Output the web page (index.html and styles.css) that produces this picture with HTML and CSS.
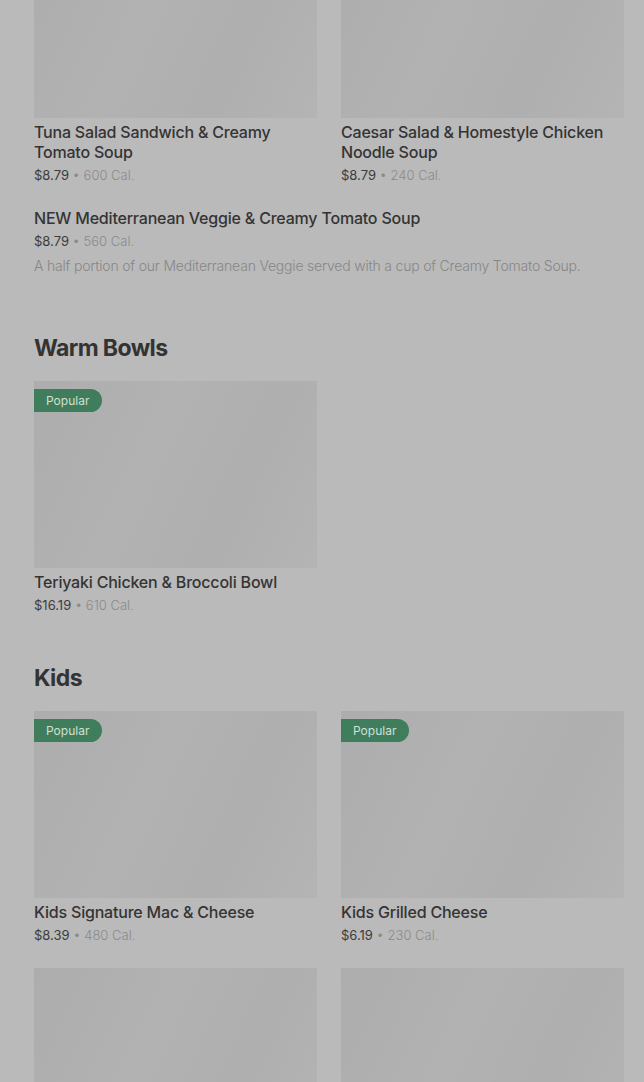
FILE: index.html
```html
<!DOCTYPE html>
<html lang="en">
<head>
  <meta charset="UTF-8" />
  <title>Menu</title>
  <link rel="stylesheet" href="styles.css">
</head>
<body>
  <div class="menu">

    <!-- Soup & Salad combos (continued) -->
    <div class="section first">
      <div class="grid">
        <div class="card">
          <div class="photo"></div>
          <div class="name">Tuna Salad Sandwich &amp; Creamy Tomato Soup</div>
          <div class="meta"><span class="price">$8.79</span> • 600 Cal.</div>
        </div>
        <div class="card">
          <div class="photo"></div>
          <div class="name">Caesar Salad &amp; Homestyle Chicken Noodle Soup</div>
          <div class="meta"><span class="price">$8.79</span> • 240 Cal.</div>
        </div>
        <div class="card wide">
          <div class="name">NEW Mediterranean Veggie &amp; Creamy Tomato Soup</div>
          <div class="meta"><span class="price">$8.79</span> • 560 Cal.</div>
          <div class="desc">A half portion of our Mediterranean Veggie served with a cup of Creamy Tomato Soup.</div>
        </div>
      </div>
    </div>

    <!-- Warm Bowls -->
    <div class="section">
      <h2>Warm Bowls</h2>
      <div class="grid">
        <div class="card">
          <div class="photo"><span class="badge">Popular</span></div>
          <div class="name">Teriyaki Chicken &amp; Broccoli Bowl</div>
          <div class="meta"><span class="price">$16.19</span> • 610 Cal.</div>
        </div>
      </div>
    </div>

    <!-- Kids -->
    <div class="section">
      <h2>Kids</h2>
      <div class="grid">
        <div class="card">
          <div class="photo"><span class="badge">Popular</span></div>
          <div class="name">Kids Signature Mac &amp; Cheese</div>
          <div class="meta"><span class="price">$8.39</span> • 480 Cal.</div>
        </div>
        <div class="card">
          <div class="photo"><span class="badge">Popular</span></div>
          <div class="name">Kids Grilled Cheese</div>
          <div class="meta"><span class="price">$6.19</span> • 230 Cal.</div>
        </div>
        <div class="card">
          <div class="photo"></div>
        </div>
        <div class="card">
          <div class="photo"></div>
        </div>
      </div>
    </div>

  </div>
</body>
</html>
```

FILE: styles.css
```css
html, body {
  margin: 0;
  padding: 0;
}

body {
  background-color: #bababa;
  font-family: Inter, "Noto Sans", sans-serif;
  color: #343434;
}

.menu {
  padding: 0 20px 60px 34px;
}

.section {
  margin-top: 50px;
}

.section.first {
  margin-top: -69px;
}

.section h2 {
  margin: 0 0 19px;
  font-size: 23px;
  line-height: 28px;
  font-weight: 700;
  letter-spacing: -0.6px;
  color: #333;
}

.grid {
  display: grid;
  grid-template-columns: 1fr 1fr;
  column-gap: 24px;
  row-gap: 24px;
}

.card.wide {
  grid-column: 1 / -1;
  padding-bottom: 8px;
}

.photo {
  position: relative;
  height: 187px;
  margin-bottom: 4px;
  background: linear-gradient(115deg, #adadad 0%, #b2b2b2 40%, #afafaf 70%, #b4b4b4 100%);
}

.badge {
  position: absolute;
  top: 8px;
  left: 0;
  height: 23px;
  padding: 0 13px 0 12px;
  border-radius: 0 12px 12px 0;
  background-color: #3f7d5c;
  color: #cfe0d6;
  font-size: 12px;
  line-height: 23px;
}

.name {
  font-size: 16px;
  line-height: 20px;
  font-weight: 500;
  color: #343434;
  letter-spacing: -0.2px;
}

.meta {
  margin-top: 4px;
  font-size: 13px;
  line-height: 18px;
  color: #8a8a8a;
  font-weight: 300;
}

.meta .price {
  color: #3c3c3c;
  font-weight: 400;
}

.desc {
  margin-top: 6px;
  font-size: 14px;
  line-height: 20px;
  font-weight: 300;
  letter-spacing: -0.2px;
  color: #878787;
}
```
